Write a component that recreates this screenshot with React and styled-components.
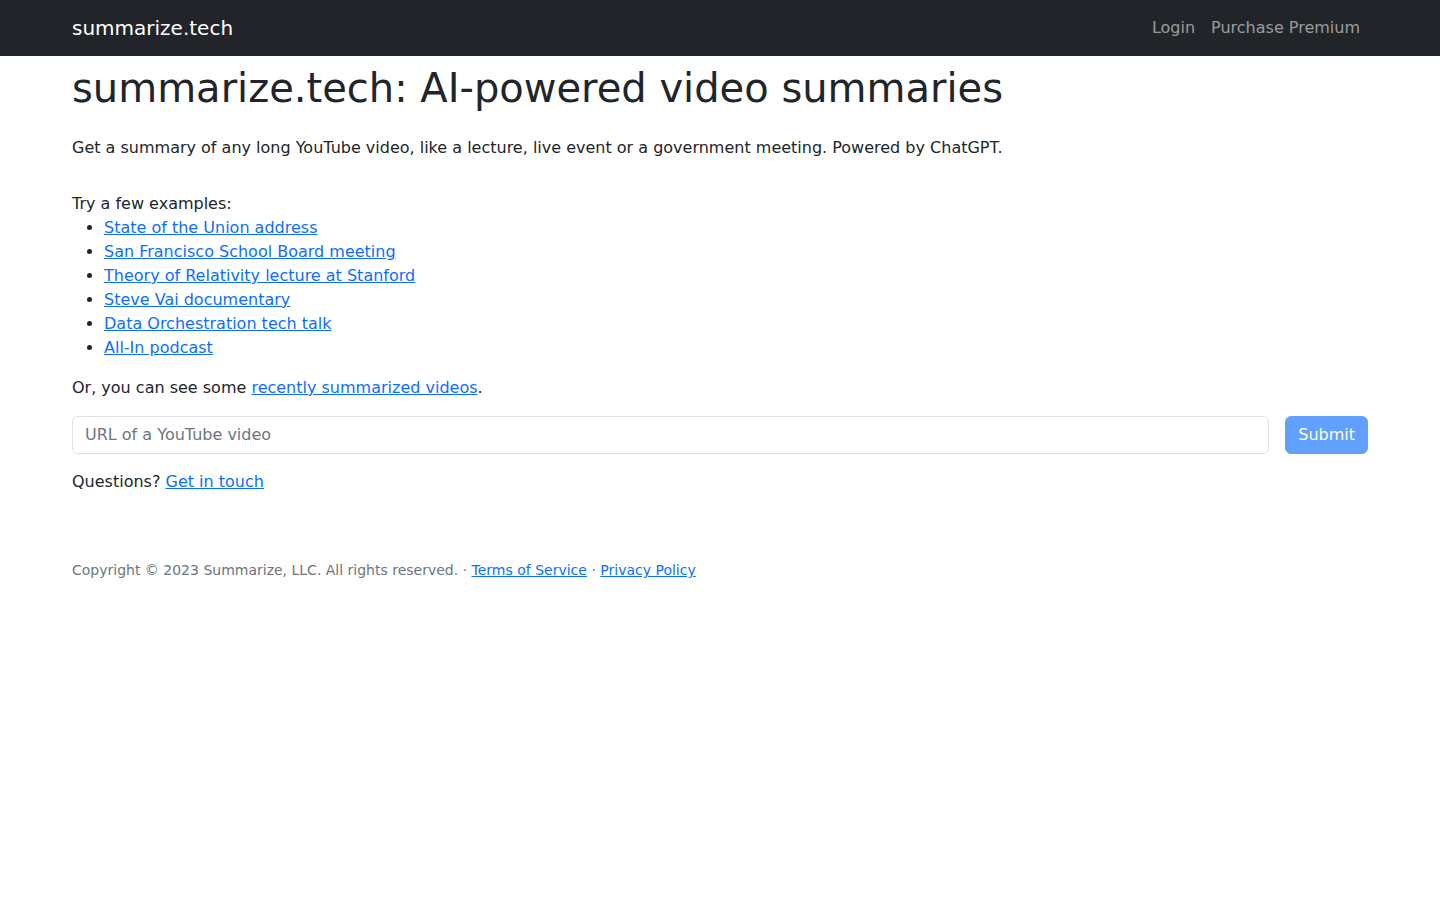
import React, { useState } from 'react';
import styled, { createGlobalStyle } from 'styled-components';

const GlobalStyle = createGlobalStyle`
  * { box-sizing: border-box; }
  body {
    margin: 0;
    font-family: "DejaVu Sans", "Liberation Sans", sans-serif;
    font-size: 16px;
    line-height: 1.5;
    color: #212529;
    background: #fff;
  }
`;

const Navbar = styled.nav`
  background-color: #212529;
  padding: 8px 0;
`;

const Container = styled.div`
  max-width: 1320px;
  margin: 0 auto;
  padding: 0 12px;
`;

const NavInner = styled(Container)`
  display: flex;
  align-items: center;
  justify-content: space-between;
`;

const Brand = styled.a`
  color: #fff;
  font-size: 20px;
  line-height: 30px;
  padding: 5px 0;
  text-decoration: none;
`;

const NavLinks = styled.div`
  display: flex;
`;

const NavLink = styled.a`
  color: rgba(255, 255, 255, 0.55);
  padding: 8px;
  text-decoration: none;
`;

const Main = styled(Container)`
  padding-top: 8px;
`;

const Title = styled.h1`
  font-size: 40px;
  font-weight: 500;
  line-height: 1.2;
  margin: 0 0 8px;
`;

const Lead = styled.p`
  margin: 24px 0 32px;
`;

const Text = styled.p`
  margin: 0 0 16px;
`;

const Plain = styled.div``;

const Examples = styled.ul`
  margin: 0 0 16px;
  padding-left: 32px;
`;

const A = styled.a`
  color: #0d6efd;
  text-decoration: underline;
`;

const SearchRow = styled.form`
  display: flex;
  gap: 16px;
  margin-bottom: 16px;
`;

const UrlInput = styled.input`
  flex: 1;
  font: inherit;
  color: #212529;
  padding: 6px 12px;
  line-height: 1.5;
  border: 1px solid #dee2e6;
  border-radius: 6px;
  outline: none;
  &::placeholder { color: #6c757d; }
`;

const SubmitButton = styled.button`
  font: inherit;
  line-height: 1.5;
  padding: 6px 12px;
  color: #fff;
  background-color: #0d6efd;
  border: 1px solid #0d6efd;
  border-radius: 6px;
  opacity: ${p => (p.disabled ? 0.65 : 1)};
`;

const Footer = styled.footer`
  margin-top: 66px;
  font-size: 14px;
  color: #6c757d;
`;

const examples = [
  'State of the Union address',
  'San Francisco School Board meeting',
  'Theory of Relativity lecture at Stanford',
  'Steve Vai documentary',
  'Data Orchestration tech talk',
  'All-In podcast',
];

export default function App() {
  const [url, setUrl] = useState('');

  return (
    <>
      <GlobalStyle />
      <Navbar>
        <NavInner>
          <Brand href="#">summarize.tech</Brand>
          <NavLinks>
            <NavLink href="#">Login</NavLink>
            <NavLink href="#">Purchase Premium</NavLink>
          </NavLinks>
        </NavInner>
      </Navbar>

      <Main>
        <Title>summarize.tech: AI-powered video summaries</Title>
        <Lead>
          Get a summary of any long YouTube video, like a lecture, live event or a government meeting. Powered by ChatGPT.
        </Lead>

        <Plain>Try a few examples:</Plain>
        <Examples>
          {examples.map(e => (
            <li key={e}><A href="#">{e}</A></li>
          ))}
        </Examples>

        <Text>
          Or, you can see some <A href="#">recently summarized videos</A>.
        </Text>

        <SearchRow onSubmit={e => e.preventDefault()}>
          <UrlInput
            placeholder="URL of a YouTube video"
            value={url}
            onChange={e => setUrl(e.target.value)}
          />
          <SubmitButton type="submit" disabled={!url}>Submit</SubmitButton>
        </SearchRow>

        <Text>
          Questions? <A href="#">Get in touch</A>
        </Text>

        <Footer>
          Copyright © 2023 Summarize, LLC. All rights reserved.{' · '}
          <A href="#">Terms of Service</A>{' · '}
          <A href="#">Privacy Policy</A>
        </Footer>
      </Main>
    </>
  );
}
